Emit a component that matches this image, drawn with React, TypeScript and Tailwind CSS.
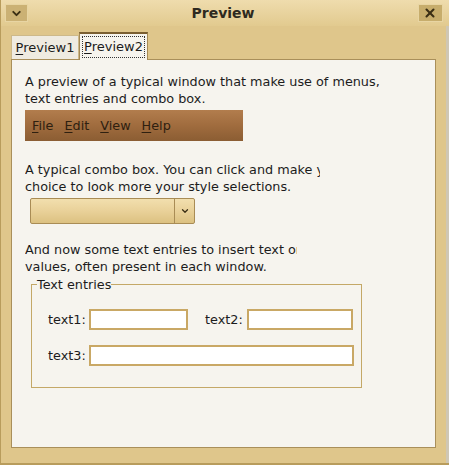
import { ChevronDown, X } from "lucide-react";

const font = { fontFamily: '"DejaVu Sans", sans-serif' };

const Mnemonic = ({ first, rest }: { first: string; rest: string }) => (
  <span>
    <span className="underline underline-offset-2">{first}</span>
    {rest}
  </span>
);

const Entry = ({ w }: { w: string }) => (
  <div className={`${w} h-[21px] bg-white border-2 border-[#c9a865]`}></div>
);

export default function App() {
  return (
    <div
      className="w-[449px] h-[465px] flex flex-col bg-[#dfc68b] border-l border-b-2 border-[#b89c5c] text-[#1c1c1c] text-[12.8px]"
      style={font}
    >
      {/* TITLE BAR */}
      <div className="h-[26px] flex items-center justify-between px-[4px] bg-gradient-to-b from-[#efdcad] to-[#e2ca8f]">
        <div className="w-[23px] h-[18px] flex items-center justify-center bg-[#cbb174] border border-[#e8d5a3]">
          <ChevronDown size={13} strokeWidth={3.5} className="text-[#3a2e14]" />
        </div>
        <div className="font-bold text-[14px] text-[#2e2a20]">Preview</div>
        <div className="w-[25px] h-[18px] mr-[2px] flex items-center justify-center bg-[#c7ad6c] border border-[#e8d5a3]">
          <X size={14} strokeWidth={3.5} className="text-[#3a2e14]" />
        </div>
      </div>

      {/* TABS */}
      <div className="flex-1 flex flex-col px-[10px] pt-[6px] pb-[15px] border-r-[3px] border-[#cfc7b4]">
        <div className="h-[27px] flex items-end text-[13px]">
          <div className="w-[68px] h-[24px] flex items-center justify-center bg-[#efebe1] border border-b-0 border-[#cdb98a]">
            <Mnemonic first="P" rest="review1" />
          </div>
          <div className="w-[69px] h-[28px] -mb-[1px] relative z-10 flex items-center justify-center bg-[#f6f4ee] border border-b-0 border-t-2 border-[#a58a55] border-t-[#7a5e30]">
            <span className="px-[1px] border border-dotted border-[#333]">
              <Mnemonic first="P" rest="review2" />
            </span>
          </div>
        </div>

        {/* PANEL */}
        <div className="flex-1 bg-[#f6f4ee] border border-[#a98f5a] pl-[13px] pt-[13px]">
          <div className="w-[370px] whitespace-nowrap leading-[17px]">
            <div>A preview of a typical window that make use of menus,</div>
            <div>text entries and combo box.</div>
          </div>

          <div className="mt-[3px] w-[218px] h-[31px] flex items-center gap-[11px] px-[7px] bg-gradient-to-b from-[#b27d4d] via-[#a06c3e] to-[#8b5d33] text-[#2e2010]">
            <Mnemonic first="F" rest="ile" />
            <Mnemonic first="E" rest="dit" />
            <Mnemonic first="V" rest="iew" />
            <Mnemonic first="H" rest="elp" />
          </div>

          <div className="mt-[20px] w-[295px] overflow-hidden whitespace-nowrap leading-[17px]">
            <div>A typical combo box. You can click and make your</div>
            <div>choice to look more your style selections.</div>
          </div>

          <div className="mt-[3px] ml-[5px] w-[165px] h-[26px] flex rounded-[2px] border border-[#a98c55] bg-gradient-to-b from-[#f2dfae] via-[#e9d199] to-[#dcc181]">
            <div className="flex-1 border-r border-[#a98c55]"></div>
            <div className="w-[19px] flex items-center justify-center">
              <ChevronDown size={10} strokeWidth={3} className="text-[#3a2e14]" />
            </div>
          </div>

          <div className="mt-[17px] w-[272px] overflow-hidden whitespace-nowrap leading-[17px]">
            <div>And now some text entries to insert text or</div>
            <div>values, often present in each window.</div>
          </div>

          {/* FRAME */}
          <div className="relative mt-[9px] ml-[6px] w-[331px] h-[104px] border border-[#c4a867]">
            <div className="absolute -top-[9px] left-[5px] bg-[#f6f4ee] leading-[17px]">Text entries</div>
            <div className="pt-[24px] pl-[16px] flex flex-col gap-[15px]">
              <div className="flex items-center">
                <span className="w-[41px]">text1:</span>
                <Entry w="w-[99px]" />
                <span className="ml-[17px] w-[42px]">text2:</span>
                <Entry w="w-[106px]" />
              </div>
              <div className="flex items-center">
                <span className="w-[41px]">text3:</span>
                <Entry w="w-[265px]" />
              </div>
            </div>
          </div>
        </div>
      </div>
    </div>
  );
}
